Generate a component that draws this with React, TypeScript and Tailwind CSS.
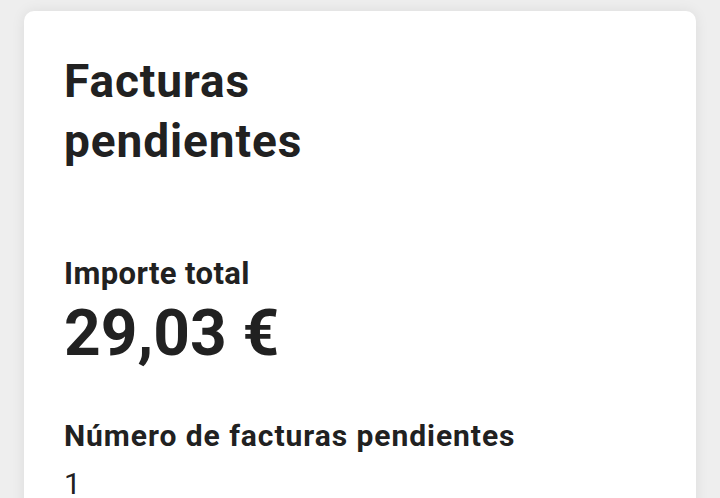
export default function App() {
  return (
    <div
      className="w-[720px] h-[498px] overflow-hidden bg-[#eeeeee] px-6 pt-[11px]"
      style={{ fontFamily: "Roboto, 'Noto Sans', Arial, sans-serif" }}
    >
      <div className="h-[600px] rounded-[10px] bg-white pl-10 pt-10 text-[#212121] shadow-[0_0_14px_rgba(0,0,0,0.08)]">
        <h1 className="text-[46px] leading-[60px] font-bold tracking-[0.9px]">
          Facturas
          <br />
          pendientes
        </h1>
        <div className="mt-[83px] text-[31px] leading-[40px] font-bold tracking-[0.4px]">Importe total</div>
        <div className="text-[64px] leading-[80px] font-bold">29,03 €</div>
        <div className="mt-[42px] text-[30px] leading-[40px] font-bold tracking-[0.95px]">
          Número de facturas pendientes
        </div>
        <div className="mt-[8px] text-[30px] leading-[40px] font-normal">1</div>
      </div>
    </div>
  );
}
